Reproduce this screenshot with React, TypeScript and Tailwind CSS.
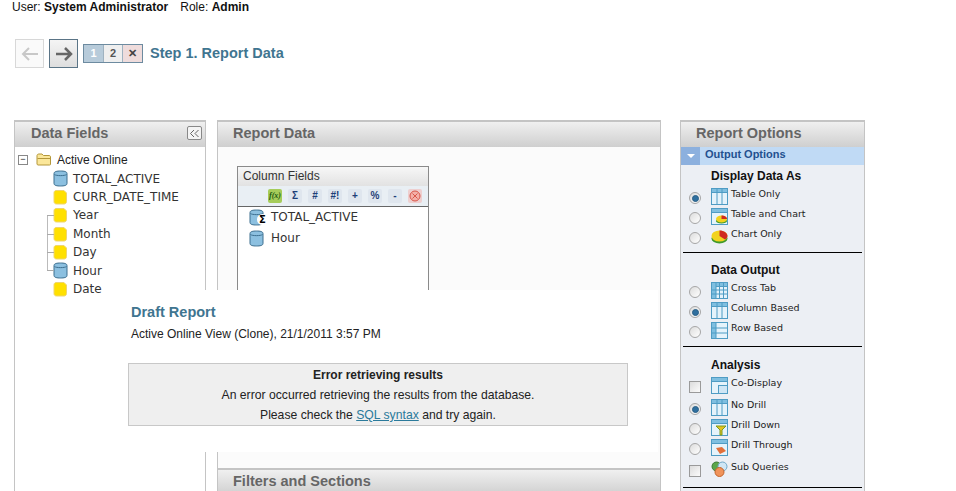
import React from "react";

const sans = "font-['Liberation_Sans',Arial,sans-serif]";
const verdana = "font-['DejaVu_Sans',Verdana,sans-serif]";

const Cyl = () => (
  <svg width="15" height="17" viewBox="0 0 15 17" className="shrink-0">
    <path d="M1 3.500C1 1.500 4 1 7.500 1S14 1.500 14 3.500V13.500C14 15.500 11 16 7.500 16S1 15.500 1 13.500Z" fill="#8cc0e0" stroke="#3d6f8f" />
    <path d="M1.500 4.500C3 6 12 6 13.500 4.500" fill="none" stroke="#3d6f8f" />
  </svg>
);
const Dim = () => (
  <svg width="15" height="16" viewBox="0 0 15 16" className="shrink-0">
    <path d="M3 1.500H11L13.500 4V12.500C13.500 14 12.500 15 11 15H3.500C2 15 1 14 1 12.500V3.500C1 2.500 2 1.500 3 1.500Z" fill="#ffe000" stroke="#efd56e" />
  </svg>
);
const Folder = () => (
  <svg width="16" height="13" viewBox="0 0 16 13">
    <path d="M1 11V2.500C1 1.500 2 1 3 1H6L7.500 2.500H13C14 2.500 14.500 3 14.500 4V11.500C14.500 12 14 12 13.500 12H2C1.500 12 1 11.500 1 11Z" fill="#fbe79a" stroke="#b4973a" />
    <path d="M1.500 5.500H14" stroke="#b4973a" />
  </svg>
);

function TreeRow({ label, cyl, branch }: { label: string; cyl?: boolean; branch?: boolean }) {
  return (
    <div className={`relative flex h-[18.4px] items-center gap-[5px] pl-[38px] ${verdana} text-[12px] text-[#333]`}>
      {branch && <span className="absolute left-[32px] top-[9px] h-px w-[7px] bg-[#aaa]" />}
      {cyl ? <Cyl /> : <Dim />}
      <span>{label}</span>
    </div>
  );
}

function PanelHeader({ title, className = "" }: { title: string; className?: string }) {
  return (
    <div className={`flex h-[27px] items-center border-t-2 border-[#c4c4c4] bg-gradient-to-b from-[#f0f0f0] to-[#cfcfcf] ${sans} text-[14.500px] font-bold text-[#666] ${className}`}>
      {title}
    </div>
  );
}

function Radio({ on }: { on?: boolean }) {
  return (
    <span className="flex h-[12px] w-[12px] shrink-0 items-center justify-center rounded-full border border-[#a6a6a6] bg-gradient-to-br from-[#dcdcdc] to-[#ffffff]">
      {on && <span className="h-[7px] w-[7px] rounded-full border border-[#2a5f86] bg-[#2f6f9f]" />}
    </span>
  );
}
const Check = () => <span className="block h-[12px] w-[12px] shrink-0 border border-[#9a9a9a] bg-gradient-to-br from-[#dcdcdc] to-[#fbfbfb]" />;

function Grid({ kind, children }: { kind: "table" | "cross" | "col" | "row" | "win"; children?: React.ReactNode }) {
  return (
    <svg width="17" height="17" viewBox="0 0 17 17" className="shrink-0">
      <rect x="0.500" y="0.500" width="16" height="16" fill="#e5f3fb" stroke="#4f9cc4" />
      <rect x="0.500" y="0.500" width="16" height={kind === "row" ? 16 : 4} fill="#7fbfe0" stroke="#4f9cc4" />
      {kind === "row" && <rect x="5" y="1" width="11" height="15" fill="#e5f3fb" />}
      {(kind === "table" || kind === "col") && <path d="M6 1V16M11 1V16" stroke="#4f9cc4" />}
      {kind === "cross" && (
        <>
          <rect x="1" y="1" width="4" height="15" fill="#7fbfe0" />
          <path d="M5 1V16M8.500 1V16M12.500 1V16M1 8H16M1 12H16" stroke="#4f9cc4" />
        </>
      )}
      {kind === "row" && <path d="M1 6H16M1 11H16M5 1V16" stroke="#4f9cc4" />}
      {children}
    </svg>
  );
}
const Pie = () => (
  <svg width="17" height="15" viewBox="0 0 17 15" className="shrink-0">
    <ellipse cx="8.500" cy="9.500" rx="8" ry="5" fill="#3f9a2a" />
    <ellipse cx="8.500" cy="7" rx="8" ry="5.500" fill="#f2d21c" />
    <path d="M8.500 7L8.500 1.500C13 1.500 16.500 4 16.500 7C16.500 8.500 15.500 9.500 14 10.500Z" fill="#cf2a1e" />
  </svg>
);
const Venn = () => (
  <svg width="17" height="17" viewBox="0 0 17 17" className="shrink-0">
    <circle cx="5.500" cy="5.500" r="4.500" fill="#5aa64a" stroke="#3d7a35" />
    <circle cx="11.500" cy="5.500" r="4.500" fill="#cfe6f5" stroke="#6fa8c8" />
    <circle cx="8.500" cy="11" r="4.500" fill="#f0935a" stroke="#c4652c" />
  </svg>
);

function Opt({ control, icon, label, tall }: { control: React.ReactNode; icon: React.ReactNode; label: string; tall?: boolean }) {
  return (
    <div className={`flex h-[20px] items-center ${tall ? "mb-[2px]" : ""}`}>
      <span className="mt-[4px] w-[24px] pl-[5px]">{control}</span>
      <span className="flex w-[19px] justify-start overflow-visible pl-[3px]">{icon}</span>
      <span className={`-mt-[4px] ml-[4px] ${verdana} text-[9.500px] text-[#222]`}>{label}</span>
    </div>
  );
}

function Section({ title, className, children }: { title: string; className: string; children: React.ReactNode }) {
  return (
    <div className={`mx-[2px] border-b border-black px-[1px] ${className}`}>
      <div className={`mb-[2px] pl-[27px] ${sans} text-[12px] font-bold leading-[15px] text-[#111]`}>{title}</div>
      {children}
    </div>
  );
}

const tools: [string, string][] = [
  ["f(x)", "bg-[#a6cc5a] text-[#1c5a12] italic font-['Liberation_Serif',serif]"],
  ["Σ", "bg-[#dfe6ee] text-[#1e3f78]"],
  ["#", "bg-[#dfe6ee] text-[#1e3f78]"],
  ["#!", "bg-[#dfe6ee] text-[#1e3f78]"],
  ["+", "bg-[#dfe6ee] text-[#1e3f78]"],
  ["%", "bg-[#dfe6ee] text-[#1e3f78]"],
  ["-", "bg-[#dfe6ee] text-[#1e3f78]"],
];

export default function App() {
  return (
    <div className={`relative h-[491px] w-[956px] overflow-hidden bg-white ${sans} text-[12px] text-[#111]`}>
      <div className="h-[39px] pl-[12px] pt-[1px] leading-[13px]">
        User: <b>System Administrator</b>
        <span className="ml-[12px]">Role: </span>
        <b>Admin</b>
      </div>

      <div className="flex h-[81px] items-start pl-[15px]">
        <div className="flex h-[29px] w-[29px] items-center justify-center border border-[#d8d8d8] bg-[#fafafa]">
          <svg width="18" height="14" viewBox="0 0 18 14"><path d="M17 7H2M8 1L2 7L8 13" fill="none" stroke="#c8c8c8" strokeWidth="2" /></svg>
        </div>
        <div className="ml-[5px] flex h-[29px] w-[29px] items-center justify-center border border-[#5a7486] bg-gradient-to-b from-[#f4f4f4] to-[#dedede]">
          <svg width="18" height="14" viewBox="0 0 18 14"><path d="M1 7H16M10 1L16 7L10 13" fill="none" stroke="#666" strokeWidth="2.500" /></svg>
        </div>
        <div className="ml-[5px] mt-[5px] flex h-[19px] border border-[#6d8ba0] text-[11px] font-bold">
          <span className="flex w-[19px] items-center justify-center bg-[#b7cbda] text-white">1</span>
          <span className="flex w-[20px] items-center justify-center border-x border-[#9fb2c0] bg-[#efefef] text-[#555]">2</span>
          <span className="flex w-[19px] items-center justify-center bg-[#efdcdc] font-bold text-[#444]">✕</span>
        </div>
        <div className="ml-[7px] mt-[6px] text-[14.500px] font-bold leading-[16px] text-[#3f7590]">Step 1. Report Data</div>
      </div>

      <div className="flex items-start pl-[14px]">
        <div className="h-[371px] w-[192px] border-x border-[#c4c4c4]">
          <PanelHeader title="Data Fields" className="pb-[2px] pl-[16px]" />
          <span className="absolute left-[187px] top-[126px] flex h-[14px] w-[15px] items-center justify-center rounded-[2px] border border-[#888] bg-[#f4f4f4]">
            <svg width="11" height="9" viewBox="0 0 11 9"><path d="M5 1L1.500 4.500L5 8M9.500 1L6 4.500L9.500 8" fill="none" stroke="#666" /></svg>
          </span>
          <div className="relative pt-[3px]">
            <span className="absolute left-[32px] top-[68px] h-[56px] w-px bg-[#bbb]" />
            <div className="flex h-[19.500px] items-center pl-[3px]">
              <span className="flex h-[10px] w-[10px] items-center justify-center border border-[#888] text-[9px] leading-none">−</span>
              <span className="ml-[8px] flex"><Folder /></span>
              <span className="ml-[5px] text-[12px] text-[#222]">Active Online</span>
            </div>
            <TreeRow label="TOTAL_ACTIVE" cyl />
            <TreeRow label="CURR_DATE_TIME" />
            <TreeRow label="Year" branch />
            <TreeRow label="Month" branch />
            <TreeRow label="Day" branch />
            <TreeRow label="Hour" cyl branch />
            <TreeRow label="Date" />
          </div>
        </div>

        <div className="ml-[11px] w-[444px] border-x border-[#c4c4c4]">
          <PanelHeader title="Report Data" className="pb-[2px] pl-[15px]" />
          <div className="h-[321px] bg-[#fbfbfb] pl-[19px] pt-[19px]">
            <div className="h-[160px] w-[192px] border border-[#8a8a8a] bg-white">
              <div className="flex h-[19px] items-center bg-gradient-to-b from-[#f7f7f7] to-[#e2e2e2] pb-[1px] pl-[5px] text-[12px] text-[#333]">Column Fields</div>
              <div className="flex h-[21px] items-center justify-end gap-[6px] border-b border-[#666] bg-[#e9eff4] pr-[6px]">
                {tools.map(([t, c]) => (
                  <span key={t} className={`flex h-[14px] w-[14px] items-center justify-center rounded-[2px] text-[10px] font-bold leading-none ${c}`}>{t === "f(x)" ? <span className="text-[8px]">f(x)</span> : t}</span>
                ))}
                <span className="flex h-[14px] w-[14px] items-center justify-center rounded-[2px] bg-[#eecfcf]">
                  <svg width="12" height="12" viewBox="0 0 12 12"><circle cx="6" cy="6" r="5" fill="#f3b0a8" stroke="#d8564a" /><path d="M3.500 3.500L8.500 8.500M8.500 3.500L3.500 8.500" stroke="#d8564a" /></svg>
                </span>
              </div>
              <div className={`${verdana} pl-[11px] text-[12px] text-[#333]`}>
                <div className="relative flex h-[20.500px] items-center gap-[7px]">
                  <Cyl />
                  <span className="absolute left-[8px] top-[7px] flex h-[11px] w-[11px] items-center justify-center rounded-full bg-white text-[10px] font-bold leading-none text-black">Σ</span>
                  <span>TOTAL_ACTIVE</span>
                </div>
                <div className="flex h-[21px] items-center gap-[7px]"><Cyl /><span>Hour</span></div>
              </div>
            </div>
          </div>
          <PanelHeader title="Filters and Sections" className="pb-[1px] pl-[15px]" />
        </div>

        <div className="ml-[19px] h-[371px] w-[185px] border-x border-[#c4c4c4] bg-[#eceff4]">
          <PanelHeader title="Report Options" className="pb-[2px] pl-[15px]" />
          <div className="flex h-[18px] items-center bg-[#c0daf5] pb-[3px]">
            <span className="-mb-[3px] flex h-[18px] w-[19px] items-center justify-center bg-[#8cb0de]">
              <span className="border-x-[4px] border-t-[4px] border-x-transparent border-t-white" />
            </span>
            <span className="ml-[5px] text-[11px] font-bold text-[#23508f]">Output Options</span>
          </div>
          <Section title="Display Data As" className="pb-[6px] pt-[4px]">
            <Opt control={<Radio on />} icon={<Grid kind="table" />} label="Table Only" />
            <Opt control={<Radio />} icon={<Grid kind="win"><ellipse cx="10.500" cy="13" rx="5.500" ry="2.500" fill="#3f9a2a" /><ellipse cx="10.500" cy="11" rx="5.500" ry="3.500" fill="#f2d21c" /><path d="M10.500 11V7.500C13.500 7.500 16 9 16 11Z" fill="#cf2a1e" /></Grid>} label="Table and Chart" />
            <Opt control={<Radio />} icon={<Pie />} label="Chart Only" />
          </Section>
          <Section title="Data Output" className="pb-[6px] pt-[10px]">
            <Opt control={<Radio />} icon={<Grid kind="cross" />} label="Cross Tab" />
            <Opt control={<Radio on />} icon={<Grid kind="col" />} label="Column Based" />
            <Opt control={<Radio />} icon={<Grid kind="row" />} label="Row Based" />
          </Section>
          <Section title="Analysis" className="pb-[8px] pt-[11px]">
            <Opt tall control={<Check />} icon={<Grid kind="win"><rect x="7.500" y="8.500" width="9" height="8" fill="#cfe6f5" stroke="#4f9cc4" /></Grid>} label="Co-Display" />
            <Opt control={<Radio on />} icon={<Grid kind="col" />} label="No Drill" />
            <Opt control={<Radio />} icon={<Grid kind="win"><path d="M5 7H15L11 11V16H9V11Z" fill="#e5c21c" stroke="#7a9a20" /></Grid>} label="Drill Down" />
            <Opt tall control={<Radio />} icon={<Grid kind="win"><path d="M5 9L11 8L15 12L9 15Z" fill="#e2703a" /></Grid>} label="Drill Through" />
            <Opt control={<Check />} icon={<Venn />} label="Sub Queries" />
          </Section>
        </div>
      </div>

      <div className="absolute left-[122px] top-[290px] h-[162px] w-[536px] bg-white">
        <div className="pl-[9px] pt-[14px] text-[14.500px] font-bold leading-[16px] text-[#3f7590]">Draft Report</div>
        <div className="pl-[9px] pt-[7px] text-[12px] leading-[14px] text-[#222]">Active Online View (Clone), 21/1/2011 3:57 PM</div>
        <div className="ml-[6px] mt-[22px] h-[63px] w-[500px] border border-[#c8c8c8] bg-[#efefef] pt-[1px] text-center text-[12.200px] leading-[20px] text-[#222]">
          <div className="text-[12px] font-bold">Error retrieving results</div>
          <div>An error occurred retrieving the results from the database.</div>
          <div>Please check the <span className="text-[#2b7a9b] underline">SQL syntax</span> and try again.</div>
        </div>
      </div>
    </div>
  );
}
